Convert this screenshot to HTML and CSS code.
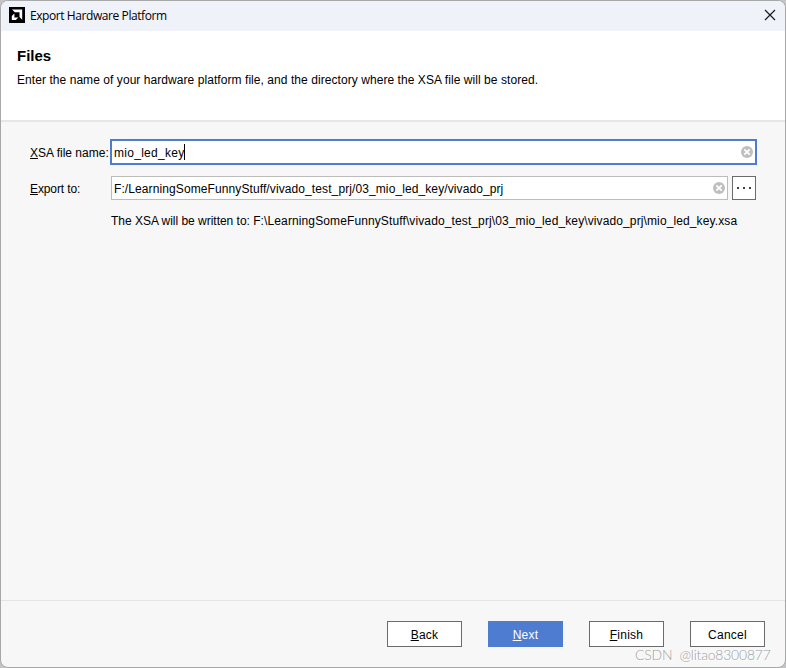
FILE: index.html
```html
<!DOCTYPE html>
<html lang="en">
<head>
<meta charset="utf-8">
<title>Export Hardware Platform</title>
<link rel="stylesheet" href="styles.css">
</head>
<body>
<div class="window">
  <header class="titlebar">
    <svg class="logo" width="16" height="16" viewBox="0 0 16 16"><rect width="16" height="16" fill="#000"/><path d="M3 2.5H13.2V12.8L10.5 10V5.3H5.8Z" fill="#fff"/><path d="M5.4 6.5V10.4H9.3L6.9 13H2.8V9.1Z" fill="#fff"/></svg>
    <span class="title">Export Hardware Platform</span>
    <svg class="close" width="12" height="12" viewBox="0 0 12 12"><path d="M1 1L11 11M11 1L1 11" stroke="#1a1a1a" stroke-width="1.2"/></svg>
  </header>
  <section class="intro">
    <h1>Files</h1>
    <p class="description">Enter the name of your hardware platform file, and the directory where the XSA file will be stored.</p>
  </section>
  <main class="form">
    <div class="row row-name">
      <label class="name-label"><u>X</u>SA file name:</label>
      <div class="field focused"><span class="name-value">mio_led_key</span><i class="caret"></i>
        <svg class="clear" width="12" height="12" viewBox="0 0 12 12"><circle cx="6" cy="6" r="6" fill="#bfbfbf"/><path d="M3.3 3.3L8.7 8.7M8.7 3.3L3.3 8.7" stroke="#fff" stroke-width="1.7"/></svg>
      </div>
    </div>
    <div class="row row-export">
      <label class="export-label"><u>E</u>xport to:</label>
      <div class="field"><span class="path-value">F:/LearningSomeFunnyStuff/vivado_test_prj/03_mio_led_key/vivado_prj</span>
        <svg class="clear" width="12" height="12" viewBox="0 0 12 12"><circle cx="6" cy="6" r="6" fill="#bfbfbf"/><path d="M3.3 3.3L8.7 8.7M8.7 3.3L3.3 8.7" stroke="#fff" stroke-width="1.7"/></svg>
      </div>
      <button class="browse" aria-label="Browse"><svg width="14" height="2" viewBox="0 0 14 2"><path d="M0 0h2v2H0zM6 0h2v2H6zM12 0h2v2h-2z" fill="#404040"/></svg></button>
    </div>
    <p class="note"><span class="note-lead">The XSA will be written to: </span>F:\LearningSomeFunnyStuff\vivado_test_prj\03_mio_led_key\vivado_prj\mio_led_key.xsa</p>
  </main>
  <footer class="actions">
    <button><span><u>B</u>ack</span></button>
    <button class="primary"><span><u>N</u>ext</span></button>
    <button><span><u>F</u>inish</span></button>
    <button><span>Cancel</span></button>
  </footer>
</div>
<div class="watermark">CSDN&nbsp; @litao8300877</div>
</body>
</html>
```

FILE: styles.css
```css
* { box-sizing: border-box; }
body {
  margin: 0;
  width: 786px;
  height: 668px;
  overflow: hidden;
  background: #c4c4c6;
  color: #000;
  font: 12px/16px "Liberation Sans", Arial, sans-serif;
}
h1, p { margin: 0; white-space: nowrap; }
u { text-decoration: underline; text-underline-offset: 1px; text-decoration-thickness: 1px; text-decoration-skip-ink: none; }
.window {
  width: 786px;
  height: 668px;
  display: flex;
  flex-direction: column;
  border: 1px solid #a8a8a8;
  border-radius: 8px;
  overflow: hidden;
  background: #f7f7f7;
}
.titlebar {
  height: 30px;
  flex: none;
  display: flex;
  align-items: center;
  padding: 0 9px 2px 8px;
  background: #f0f2f9;
}
.title {
  margin-left: 5px;
  padding-top: 2px;
  font-family: "Open Sans", "Noto Sans", sans-serif;
  font-size: 12px;
  letter-spacing: -0.42px;
}
.close { margin-left: auto; }
.intro {
  height: 91px;
  flex: none;
  padding: 16px 16px 0;
  background: #fff;
  border-bottom: 2px solid #e6e6e6;
}
h1 { font: bold 15px/18px "Liberation Sans", Arial, sans-serif; letter-spacing: 0; }
.description { margin-top: 7px; letter-spacing: 0.062px; }
.form { flex: 1; padding: 17px 28px 0 29px; }
.row { display: flex; align-items: center; }
.row-name { height: 26px; }
.row-export { height: 24px; margin-top: 11px; padding-right: 1px; }
label { width: 81px; flex: none; padding-top: 2px; white-space: nowrap; }
.row-name label { width: 80px; }
.row-export label { letter-spacing: -0.12px; }
.field {
  flex: 1;
  height: 24px;
  display: flex;
  align-items: center;
  padding: 0 2px;
  border: 1px solid #bcbcbc;
  background: #fff;
  white-space: nowrap;
}
.field span { padding-top: 2px; }
.name-value { letter-spacing: 0.28px; }
.path-value { letter-spacing: 0.1px; }
.focused { height: 26px; border: 2px solid #4e7cce; }
.caret { width: 1px; height: 16px; background: #000; }
.clear { margin-left: auto; }
button {
  display: flex;
  align-items: center;
  justify-content: center;
  padding: 0;
  border: 1px solid #6b6b6b;
  background: #fff;
  color: #000;
  font: inherit;
}
.browse { width: 24px; height: 24px; margin-left: 4px; }
.note { margin: 13px 0 0 81px; letter-spacing: 0.115px; }
.note-lead { letter-spacing: -0.02px; }
.actions {
  height: 67px;
  flex: none;
  display: flex;
  justify-content: flex-end;
  gap: 26px;
  padding: 20px 20px 0 0;
  border-top: 1px solid #e4e4e4;
}
.actions button { width: 75px; height: 26px; padding-top: 2px; letter-spacing: 0.25px; }
.actions .primary { border-color: #4e7cd0; background: #4e7cd0; color: #fff; }
.watermark {
  position: absolute;
  left: 635px;
  top: 646px;
  color: #a0a0a0;
  font: 300 14px/18px Lato, "Open Sans", sans-serif;
  letter-spacing: -0.22px;
  text-shadow: 1px 1px 0 #fff;
  white-space: nowrap;
}
```
